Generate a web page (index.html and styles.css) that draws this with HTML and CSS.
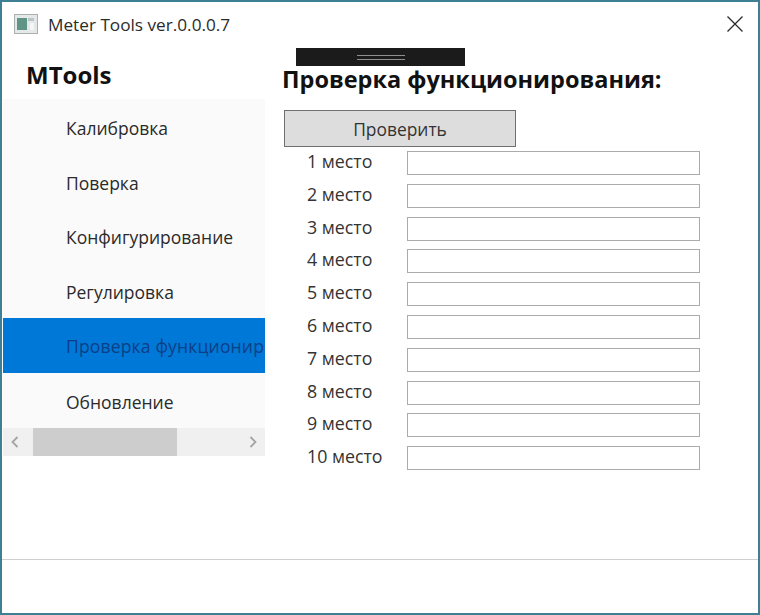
FILE: index.html
```html
<!DOCTYPE html>
<html lang="ru">
<head>
<meta charset="utf-8">
<title>Meter Tools</title>
<link rel="stylesheet" href="styles.css">
</head>
<body>
<div class="window">
  <header class="titlebar">
    <svg class="app-icon" width="24" height="20" viewBox="0 0 24 20">
      <rect x="0.5" y="0.5" width="23" height="19" fill="#e4e8e8" stroke="#a9b0b0"/>
      <rect x="3" y="4" width="10" height="12" fill="#5f9486"/>
      <rect x="14" y="4" width="6" height="3" fill="#b9c6c4"/>
      <rect x="16" y="9" width="4" height="7" fill="#f4f6f6"/>
    </svg>
    <span class="app-title">Meter Tools ver.0.0.0.7</span>
    <svg class="close" width="18" height="18" viewBox="0 0 18 18">
      <path d="M1.5 1.5 L16.5 16.5 M16.5 1.5 L1.5 16.5" stroke="#2a2a2a" stroke-width="1.3" fill="none"/>
    </svg>
  </header>
  <div class="content">
    <aside class="sidebar">
      <div class="brand">MTools</div>
      <nav class="menu">
        <div class="item">Калибровка</div>
        <div class="item">Поверка</div>
        <div class="item">Конфигурирование</div>
        <div class="item">Регулировка</div>
        <div class="item active">Проверка функционир</div>
        <div class="item">Обновление</div>
      </nav>
      <div class="hscroll">
        <svg class="arrow" width="10" height="14" viewBox="0 0 10 14"><path d="M7.5 2 L2.5 7 L7.5 12" stroke="#a4a4a4" stroke-width="1.8" fill="none"/></svg>
        <div class="track"><div class="thumb"></div></div>
        <svg class="arrow" width="10" height="14" viewBox="0 0 10 14"><path d="M2.5 2 L7.5 7 L2.5 12" stroke="#a4a4a4" stroke-width="1.8" fill="none"/></svg>
      </div>
    </aside>
    <main class="main">
      <div class="grip"><span class="grip-lines"></span></div>
      <h1 class="heading">Проверка функционирования:</h1>
      <button class="check">Проверить</button>
      <div class="rows">
        <div class="row"><span class="label">1 место</span><div class="field"></div></div>
        <div class="row"><span class="label">2 место</span><div class="field"></div></div>
        <div class="row"><span class="label">3 место</span><div class="field"></div></div>
        <div class="row"><span class="label">4 место</span><div class="field"></div></div>
        <div class="row"><span class="label">5 место</span><div class="field"></div></div>
        <div class="row"><span class="label">6 место</span><div class="field"></div></div>
        <div class="row"><span class="label">7 место</span><div class="field"></div></div>
        <div class="row"><span class="label">8 место</span><div class="field"></div></div>
        <div class="row"><span class="label">9 место</span><div class="field"></div></div>
        <div class="row"><span class="label">10 место</span><div class="field"></div></div>
      </div>
    </main>
  </div>
  <footer class="statusbar"></footer>
</div>
</body>
</html>
```
FILE: styles.css
```css
* { box-sizing: border-box; }
html, body { margin: 0; padding: 0; }
body {
  width: 760px;
  height: 615px;
  overflow: hidden;
  font-family: "Open Sans", "Noto Sans", sans-serif;
  color: #222;
  background: #fff;
}
.window {
  width: 760px;
  height: 615px;
  display: flex;
  flex-direction: column;
  background: #fff;
  border: 2px solid #3f7f93;
}
.titlebar {
  height: 44px;
  flex: none;
  display: flex;
  align-items: center;
  padding: 0 14px 0 12px;
}
.app-icon { flex: none; }
.app-title {
  margin-left: 10px;
  font-size: 17.2px;
  color: #2b2b2b;
}
.close { margin-left: auto; }
.content {
  flex: 1;
  min-height: 0;
  display: flex;
}
.sidebar {
  width: 263px;
  flex: none;
  padding-left: 1px;
}
.brand {
  height: 53px;
  padding: 14px 0 0 23px;
  font-size: 24px;
  font-weight: 700;
  color: #111;
  line-height: 30px;
}
.menu { background: #fafafa; }
.item {
  height: 54.8px;
  display: flex;
  align-items: center;
  padding: 3px 0 0 63px;
  font-size: 17.5px;
  color: #2a2a2a;
  white-space: nowrap;
  overflow: hidden;
}
.item.active {
  padding-top: 1px;
  background: #0078d7;
  color: #0d3f86;
  letter-spacing: 0.17px;
}
.hscroll {
  height: 28px;
  display: flex;
  align-items: center;
  background: #f0f0f0;
}
.arrow { flex: none; margin: 0 13px 0 7px; }
.arrow:last-child { margin: 0 7px 0 3px; }
.track {
  flex: 1;
  align-self: stretch;
  display: flex;
}
.thumb { width: 144px; background: #cdcdcd; }
.main {
  flex: 1;
  padding-left: 18px;
  display: flex;
  flex-direction: column;
  align-items: flex-start;
}
.grip {
  width: 169px;
  height: 18px;
  margin: 2px 0 0 13px;
  background: #1b1b1b;
  display: flex;
  align-items: center;
  justify-content: center;
}
.grip-lines {
  width: 48px;
  height: 5px;
  border-top: 1px solid #8e8e8e;
  border-bottom: 1px solid #8e8e8e;
}
.heading {
  margin: -2px 0 0 -1px;
  height: 46px;
  font-size: 23.5px;
  line-height: 30px;
  font-weight: 700;
  color: #111;
  white-space: nowrap;
}
.check {
  width: 232px;
  height: 37px;
  margin-left: 1px;
  background: #dddddd;
  border: 1px solid #707070;
  padding: 0;
  font-family: inherit;
  font-size: 17.4px;
  color: #333;
}
.rows {
  margin-top: 4px;
  display: flex;
  flex-direction: column;
  gap: 8.8px;
}
.row {
  display: flex;
  align-items: center;
  height: 24px;
}
.label {
  width: 100px;
  margin-left: 24px;
  font-size: 17.8px;
  color: #333;
  line-height: 20px;
  position: relative;
  top: -2px;
}
.field {
  width: 293px;
  height: 24px;
  background: #fff;
  border: 1px solid #ababab;
}
.statusbar {
  height: 54px;
  flex: none;
  border-top: 1px solid #cfcfcf;
  background: #fff;
}
```
